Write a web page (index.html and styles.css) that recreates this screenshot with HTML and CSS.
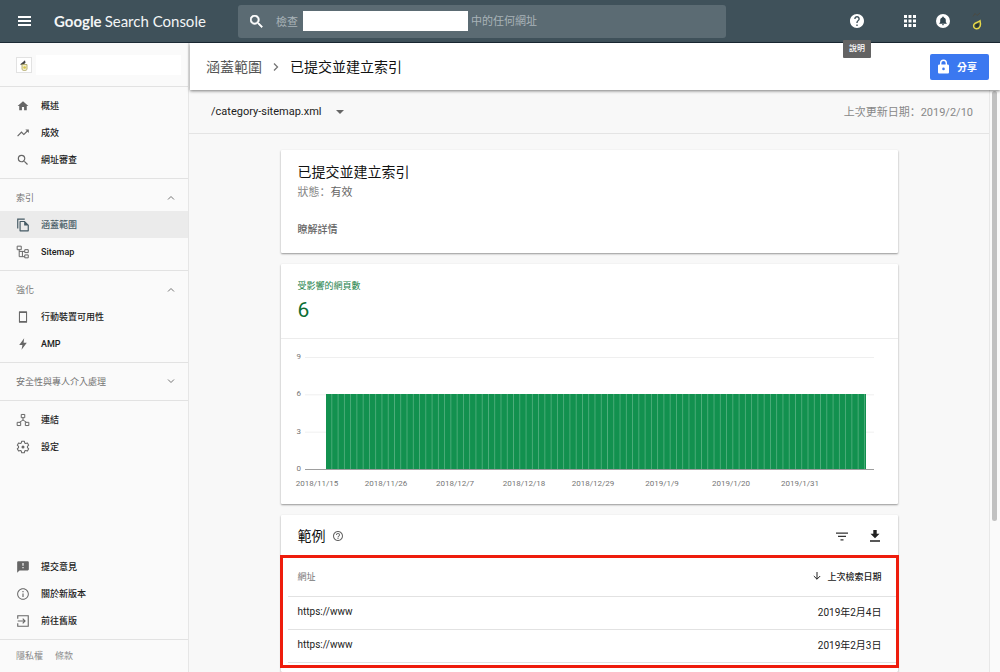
FILE: index.html
```html
<!DOCTYPE html>
<html lang="zh-Hant">
<head>
<meta charset="utf-8">
<meta name="viewport" content="width=device-width, initial-scale=1">
<title>Google Search Console</title>
<link rel="stylesheet" href="styles.css">
</head>
<body>
<header class="topbar">
  <button class="icon-button menu-button" aria-label="選單">
    <svg width="14" height="10" viewBox="0 0 14 10"><path fill="#fff" d="M0 0h13v2H0zM0 4h13v2H0zM0 8h13v2H0z"/></svg>
  </button>
  <a class="logo" href="#"><span class="logo-brand">Google</span><span class="logo-product">Search Console</span></a>
  <form class="search" role="search">
    <svg width="13" height="13" viewBox="3 3 18 18"><path fill="#fff" stroke="#fff" stroke-width=".8" d="M15.5 14h-.79l-.28-.27A6.47 6.47 0 0 0 16 9.500 6.500 6.500 0 1 0 9.500 16c1.610 0 3.090-.59 4.230-1.570l.27.28v.79l5 4.990L20.490 19l-4.990-5zm-6 0C7.010 14 5 11.990 5 9.500S7.010 5 9.500 5 14 7.010 14 9.500 11.990 14 9.500 14z"/></svg>
    <label class="search-label" for="inspect">檢查</label>
    <span class="search-property"></span>
    <input class="search-input" id="inspect" type="text" placeholder="中的任何網址">
  </form>
  <div class="actions">
    <div class="help">
      <button class="icon-button" aria-label="說明" aria-describedby="help-tip">
        <svg width="14" height="14" viewBox="2 2 20 20"><path fill="#fff" d="M12 2C6.480 2 2 6.480 2 12s4.480 10 10 10 10-4.480 10-10S17.520 2 12 2zm1 17h-2v-2h2v2zm2.070-7.750l-.9.92C13.450 12.900 13 13.500 13 15h-2v-.5c0-1.100.45-2.100 1.170-2.830l1.240-1.260c.37-.36.59-.86.59-1.410 0-1.100-.9-2-2-2s-2 .9-2 2H8c0-2.210 1.790-4 4-4s4 1.790 4 4c0 .88-.36 1.680-.93 2.250z"/></svg>
      </button>
      <span class="tooltip" id="help-tip" role="tooltip">說明</span>
    </div>
    <button class="icon-button" aria-label="應用程式">
      <svg width="12" height="12" viewBox="0 0 12 12"><path fill="#fff" d="M0 0h3v3H0zM4.500 0h3v3h-3zM9 0h3v3H9zM0 4.500h3v3H0zM4.500 4.500h3v3h-3zM9 4.500h3v3H9zM0 9h3v3H0zM4.500 9h3v3h-3zM9 9h3v3H9z"/></svg>
    </button>
    <button class="icon-button" aria-label="通知">
      <svg width="14" height="14" viewBox="0 0 14 14"><circle cx="7" cy="7" r="7" fill="#fff"/><path fill="#33464f" d="M7 2.600c.5 0 .8.3.8.8 1.300.4 2 1.400 2 2.800v2.100l.9.900v.6H3.300v-.6l.9-.9V6.200c0-1.400.7-2.400 2-2.800 0-.5.3-.8.8-.8zM6 10.200h2c0 .6-.4 1-1 1s-1-.4-1-1z"/></svg>
    </button>
    <button class="icon-button" aria-label="帳戶">
      <svg width="14" height="20" viewBox="0 0 14 20"><path d="M3 5.500l2-3 2 2 3-2.500" fill="none" stroke="#4a4a42" stroke-width="1"/><path d="M10 8.800c.5 1.900.7 4 .1 5.500-.8 1.900-2.600 2.800-4.400 2.300-1.900-.6-2.600-2.500-1.700-4.200C5 10.800 7.500 10.600 10 8.800z" transform="translate(0 1)" fill="#39443a" stroke="#e6d84a" stroke-width="1.500"/><circle cx="7.300" cy="14.300" r="1.200" fill="#22302e"/></svg>
    </button>
  </div>
</header>

<div class="layout">
  <nav class="sidebar">
    <button class="property" aria-label="資源">
      <span class="favicon"><svg width="10" height="12" viewBox="0 0 10 12"><path d="M1 5.500L6 1.200l.5 2.600L4 6z" fill="#444"/><path d="M3 5.500h5v4.500c0 1-1 1.500-2.500 1.500S3 11 3 10z" fill="#f1eecb" stroke="#a8a05a" stroke-width=".8"/><circle cx="5.600" cy="8.500" r="1.300" fill="#d9c64a"/></svg></span>
      <span class="property-name"></span>
    </button>
    <div class="group">
      <a class="item" href="#"><svg class="icon" viewBox="-1 -1 26 26"><path d="M10 20v-6h4v6h5v-8h3L12 3 2 12h3v8z"/></svg>概述</a>
      <a class="item" href="#"><svg class="icon" viewBox="0 0 24 24"><path d="M16 6l2.290 2.290-4.880 4.880-4-4L2 16.590 3.410 18l6-6 4 4 6.300-6.290L22 12V6z"/></svg>成效</a>
      <a class="item" href="#"><svg class="icon" viewBox="0 0 24 24"><path d="M15.500 14h-.79l-.28-.27A6.470 6.470 0 0 0 16 9.500 6.500 6.500 0 1 0 9.500 16c1.610 0 3.090-.59 4.230-1.570l.27.28v.79l5 4.990L20.490 19l-4.990-5zm-6 0C7.010 14 5 11.990 5 9.500S7.010 5 9.500 5 14 7.010 14 9.500 11.990 14 9.500 14z"/></svg>網址審查</a>
    </div>
    <div class="group">
      <button class="group-title">索引<svg width="8" height="5" viewBox="0 0 8 5"><path d="M1 4.500l3-3 3 3" fill="none" stroke="#757575"/></svg></button>
      <a class="item item-active" href="#" aria-current="page"><svg class="icon" viewBox="0 0 24 24"><path d="M2 1h13v2H4v15H2zM7 5h8l7 7v10a1 1 0 0 1-1 1H7a1 1 0 0 1-1-1V6a1 1 0 0 1 1-1zm1 2v14h12v-8h-6V7z" fill-rule="evenodd"/></svg>涵蓋範圍</a>
      <a class="item" href="#"><svg class="icon" viewBox="0 0 24 24"><path d="M2 2h7v6H2zM15 8h6v5h-6zM15 17h6v5h-6zM5.500 8v12H15M5.500 11H15M11 11v9" fill="none" stroke="currentColor" stroke-width="1.700"/></svg>Sitemap</a>
    </div>
    <div class="group">
      <button class="group-title">強化<svg width="8" height="5" viewBox="0 0 8 5"><path d="M1 4.500l3-3 3 3" fill="none" stroke="#757575"/></svg></button>
      <a class="item" href="#"><svg class="icon" viewBox="0 0 24 24"><path d="M6 2h12a1 1 0 0 1 1 1v18a1 1 0 0 1-1 1H6a1 1 0 0 1-1-1V3a1 1 0 0 1 1-1zm.8 3v14h10.400V5z" fill-rule="evenodd"/></svg>行動裝置可用性</a>
      <a class="item" href="#"><svg class="icon" viewBox="0 0 24 24"><path d="M14 2L5.500 13.500H11L9.500 22 18.500 10H13z"/></svg>AMP</a>
    </div>
    <div class="group">
      <button class="group-title">安全性與專人介入處理<svg width="8" height="5" viewBox="0 0 8 5"><path d="M1 .5l3 3 3-3" fill="none" stroke="#757575"/></svg></button>
    </div>
    <div class="group group-last">
      <a class="item" href="#"><svg class="icon" viewBox="0 0 24 24"><path d="M9 2.500h6V8H9zM2 16h6v5.500H2zM16 16h6v5.500h-6zM12 8v4l-6 4M12 12l6 4" fill="none" stroke="currentColor" stroke-width="1.700"/></svg>連結</a>
      <a class="item" href="#"><svg class="icon" viewBox="0 0 24 24"><path d="M9.800 2h4.400l.7 3 1.800 1 2.900-.9 2.200 3.800-2.200 2.100v2l2.200 2.100-2.200 3.800-2.900-.9-1.800 1-.7 3H9.800l-.7-3-1.800-1-2.900.9-2.200-3.800L4.400 13v-2L2.200 8.900l2.200-3.800 2.900.9 1.800-1z" fill="none" stroke="currentColor" stroke-width="1.800" stroke-linejoin="round"/><circle cx="12" cy="12" r="2.600"/></svg>設定</a>
    </div>
    <div class="group group-bottom">
      <a class="item" href="#"><svg class="icon" viewBox="0 0 24 24"><path d="M20 2H4c-1.100 0-2 .9-2 2v18l4-4h14c1.100 0 2-.9 2-2V4c0-1.100-.9-2-2-2zm-7 12h-2v-2h2v2zm0-4h-2V5h2v5z"/></svg>提交意見</a>
      <a class="item" href="#"><svg class="icon" viewBox="0 0 24 24"><path d="M11 17h2v-6h-2v6zm1-15C6.480 2 2 6.480 2 12s4.480 10 10 10 10-4.480 10-10S17.520 2 12 2zm0 18.300c-4.600 0-8.300-3.700-8.300-8.300S7.400 3.700 12 3.700s8.300 3.700 8.300 8.300-3.700 8.300-8.300 8.300zM11 9h2V7h-2v2z"/></svg>關於新版本</a>
      <a class="item" href="#"><svg class="icon" viewBox="0 0 24 24"><path d="M3 8V3h18v18H3v-5M3 12h12M11.500 8l4 4-4 4" fill="none" stroke="currentColor" stroke-width="1.900"/></svg>前往舊版</a>
    </div>
    <footer class="legal"><a href="#">隱私權</a><a href="#">條款</a></footer>
  </nav>

  <main class="main">
    <div class="titlebar">
      <a class="crumb" href="#">涵蓋範圍</a>
      <svg width="6" height="8" viewBox="0 0 6 8"><path d="M1 .5L4.500 4 1 7.500" fill="none" stroke="#757575" stroke-width="1.300"/></svg>
      <h1 class="crumb crumb-current">已提交並建立索引</h1>
      <button class="share">
        <svg width="11" height="15" viewBox="0 0 11 15"><path fill="#fff" fill-rule="evenodd" d="M2 5.500V4a3.500 3.500 0 0 1 7 0v1.500h.7c.7 0 1.300.6 1.300 1.300v6.400c0 .7-.6 1.300-1.300 1.300H1.300c-.7 0-1.300-.6-1.300-1.300V6.800c0-.7.6-1.300 1.300-1.300zm1.400 0h4.200V4a2.100 2.100 0 0 0-4.200 0zM5.500 8.600a1.300 1.300 0 1 0 0 2.600 1.300 1.300 0 0 0 0-2.600z"/></svg>
        分享
      </button>
    </div>
    <div class="viewport">
      <div class="content">
        <div class="filterbar">
          <label class="sitemap-picker" aria-label="Sitemap">
            <select class="sitemap-select"><option>/category-sitemap.xml</option></select>
            <svg width="8" height="4" viewBox="0 0 8 4"><path fill="#666" d="M0 0h8L4 4z"/></svg>
          </label>
          <span class="updated">上次更新日期<span class="colon" lang="zh-Hans">：</span>2019/2/10</span>
        </div>
        <div class="cards">
          <section class="card status">
            <h2 class="card-title">已提交並建立索引</h2>
            <p class="state">狀態<span class="colon" lang="zh-Hans">：</span><span class="state-value">有效</span></p>
            <a class="learn" href="#">瞭解詳情</a>
          </section>

          <section class="card">
            <div class="metric">
              <span class="metric-label">受影響的網頁數</span>
              <span class="metric-value">6</span>
            </div>
            <div class="chart">
              <div class="plot">
                <div class="axis"><span>9</span><span>6</span><span>3</span><span>0</span></div>
                <div class="grid"><div class="bars"></div></div>
              </div>
              <div class="dates"><span>2018/11/15</span><span>2018/11/26</span><span>2018/12/7</span><span>2018/12/18</span><span>2018/12/29</span><span>2019/1/9</span><span>2019/1/20</span><span>2019/1/31</span></div>
            </div>
          </section>

          <section class="card">
            <div class="examples-head">
              <h2 class="card-title examples-title">範例</h2>
              <svg width="10" height="10" viewBox="2 2 20 20"><path fill="#666" d="M11 18h2v-2h-2v2zm1-16C6.480 2 2 6.480 2 12s4.480 10 10 10 10-4.480 10-10S17.520 2 12 2zm0 18c-4.410 0-8-3.590-8-8s3.590-8 8-8 8 3.590 8 8-3.590 8-8 8zm0-14c-2.210 0-4 1.790-4 4h2c0-1.100.9-2 2-2s2 .9 2 2c0 2-3 1.750-3 5h2c0-2.250 3-2.500 3-5 0-2.210-1.790-4-4-4z"/></svg>
              <div class="tools">
                <button class="icon-button" aria-label="篩選"><svg width="12" height="9" viewBox="0 0 12 9"><path fill="#333" d="M0 .5h12v1.300H0zM2 3.800h8v1.300H2zM4.500 7.200h3v1.300h-3z"/></svg></button>
                <button class="icon-button" aria-label="下載"><svg width="10" height="12" viewBox="0 0 10 12"><path fill="#222" d="M3.300 0h3.400v3.800h2.800L5 8.300.500 3.800h2.800zM0 10.300h10v1.400H0z"/></svg></button>
              </div>
            </div>
            <div class="highlight">
              <table class="table">
                <thead><tr><th>網址</th><th class="date sorted"><svg width="8" height="8" viewBox="0 0 8 8"><path d="M4 0v7.200M.8 4L4 7.200 7.200 4" fill="none" stroke="#222"/></svg>上次檢索日期</th></tr></thead>
                <tbody>
                  <tr><td>https://www</td><td class="date">2019年2月4日</td></tr>
                  <tr><td>https://www</td><td class="date">2019年2月3日</td></tr>
                </tbody>
              </table>
            </div>
          </section>
        </div>
      </div>
      <div class="scroll-track"><div class="scroll-thumb"></div></div>
    </div>
  </main>
</div>
</body>
</html>
```
FILE: styles.css
```css
* {
  box-sizing: border-box;
}

body {
  margin: 0;
  height: 100vh;
  display: flex;
  flex-direction: column;
  overflow: hidden;
  background: #f8f8f8;
  color: #212121;
  font-family: Roboto, "Noto Sans CJK TC", sans-serif;
  font-size: 9px;
}

a {
  color: inherit;
  text-decoration: none;
}

button,
input,
select {
  font: inherit;
  color: inherit;
  border: 0;
  padding: 0;
  background: none;
}

svg {
  display: block;
  flex: none;
}

/* The simplified-Chinese face sets this mark at the left of its cell. */
.colon {
  font-family: "Noto Sans CJK SC", sans-serif;
  line-height: 1;
}

/* Top bar */

.topbar {
  flex: none;
  display: flex;
  align-items: center;
  height: 43px;
  padding: 0 16px 0 18px;
  background: #3f515a;
  border-bottom: 1px solid #1b2a35;
}

.icon-button {
  display: flex;
  align-items: center;
}

.logo {
  display: flex;
  align-items: baseline;
  gap: 3px;
  width: 184px;
  margin-left: 22px;
  color: #f3f5f6;
  font-family: Lato, sans-serif;
  font-size: 15px;
  white-space: nowrap;
}

.logo-brand {
  font-weight: 700;
}

.search {
  flex: 0 1 488px;
  display: flex;
  align-items: center;
  height: 33px;
  padding: 0 12px;
  background: #5b6b73;
  border-radius: 3px;
  color: #a9b3b8;
  font-size: 11px;
}

.search-label {
  margin-left: 13px;
}

.search-property {
  width: 165px;
  height: 20px;
  margin: 0 3px 0 5px;
  background: #fff;
}

.search-input {
  flex: 1;
  min-width: 0;
  outline: 0;
}

.search-input::placeholder {
  color: #a9b3b8;
  opacity: 1;
}

.actions {
  display: flex;
  align-items: center;
  gap: 20px;
  margin-left: auto;
}

.help {
  position: relative;
  margin-right: 20px;
}

.tooltip {
  position: absolute;
  top: 26px;
  left: -7px;
  z-index: 3;
  padding: 0 6px;
  background: #636363;
  border-radius: 1px;
  color: #fff;
  font-size: 8px;
  font-weight: 500;
  line-height: 18px;
  white-space: nowrap;
}

.layout {
  flex: 1;
  display: flex;
  min-height: 0;
}

/* Sidebar */

.sidebar {
  flex: none;
  display: flex;
  flex-direction: column;
  width: 189px;
  border-right: 1px solid #e6e6e6;
  background: #fafafa;
}

.property {
  display: flex;
  align-items: center;
  gap: 4px;
  height: 44px;
  padding: 0 7px 0 16px;
  border-bottom: 1px solid #e2e2e2;
}

.favicon {
  display: grid;
  place-items: center;
  width: 16px;
  height: 16px;
  background: #fff;
  border: 1px solid #e2e2e2;
}

.property-name {
  flex: 1;
  height: 20px;
  background: #fff;
}

.group {
  padding: 5px 0;
  border-bottom: 1px solid #e2e2e2;
}

.group-last {
  border-bottom: 0;
}

.group-bottom {
  margin-top: auto;
}

.group-title {
  display: flex;
  align-items: center;
  justify-content: space-between;
  width: 100%;
  height: 27px;
  padding: 0 13px 0 16px;
  color: #757575;
}

.item {
  display: flex;
  align-items: center;
  gap: 11px;
  height: 27px;
  padding-left: 16px;
  font-weight: 500;
}

.item-active {
  background: #ebebeb;
  color: #455a64;
}

.icon {
  width: 14px;
  height: 14px;
  color: #666;
  fill: #666;
}

.item-active .icon {
  fill: #455a64;
}

.legal {
  display: flex;
  align-items: center;
  gap: 12px;
  height: 32px;
  padding: 0 0 2px 16px;
  color: #8a8a8a;
}

/* Main column */

.main {
  flex: 1;
  display: flex;
  flex-direction: column;
  min-width: 0;
}

.titlebar {
  position: relative;
  z-index: 2;
  flex: none;
  display: flex;
  align-items: center;
  gap: 11px;
  height: 47px;
  margin-left: 1px;
  padding: 0 11px 0 16px;
  background: #fff;
  box-shadow: 0 1px 3px rgba(0, 0, 0, 0.5);
}

.crumb {
  margin: 0;
  padding-bottom: 2px;
  color: #555;
  font-size: 14px;
  font-weight: 400;
}

.crumb-current {
  color: #111;
}

.share {
  display: flex;
  align-items: center;
  gap: 8px;
  height: 26px;
  margin-left: auto;
  padding: 0 12px 0 8px;
  background: #3b78f0;
  border-radius: 2px;
  color: #fff;
  font-size: 10px;
  font-weight: 700;
}

.viewport {
  flex: 1;
  display: flex;
  min-height: 0;
}

.content {
  flex: 1;
  min-width: 0;
  overflow: hidden;
}

.filterbar {
  display: flex;
  align-items: center;
  justify-content: space-between;
  height: 44px;
  padding: 0 16px 0 22px;
  border-bottom: 1px solid #e4e4e4;
  font-size: 11px;
}

.sitemap-picker {
  display: flex;
  align-items: center;
  gap: 14px;
}

.sitemap-select {
  appearance: none;
  outline: 0;
}

.updated {
  padding-bottom: 2px;
  color: #888;
}

.cards {
  display: flex;
  flex-direction: column;
  gap: 11px;
  max-width: 617px;
  margin: 16px auto;
}

.card {
  background: #fff;
  border-radius: 1px;
  box-shadow: 0 1px 2px rgba(0, 0, 0, 0.4);
}

.card-title {
  margin: 0;
  color: #111;
  font-size: 14px;
  font-weight: 400;
  line-height: 20px;
}

.status {
  padding: 12px 17px 14px;
  font-size: 10px;
}

.state {
  margin: 1px 0 0;
  color: #888;
  font-size: 11px;
  line-height: 20px;
}

.state-value {
  color: #666;
}

.learn {
  display: block;
  margin-top: 18px;
  color: #666;
  font-weight: 500;
  line-height: 18px;
}

.metric {
  display: flex;
  flex-direction: column;
  height: 75px;
  padding: 14px 17px 0;
  border-bottom: 1px solid #ececec;
  color: #23824a;
}

.metric-label {
  line-height: 16px;
}

.metric-value {
  color: #0d6e33;
  font-size: 21px;
  line-height: 32px;
}

.chart {
  padding: 12px 0 13px;
  color: #757575;
  font-size: 8px;
}

.plot {
  display: flex;
  gap: 3px;
  padding: 0 24px 0 16px;
}

.axis {
  display: flex;
  flex-direction: column;
  justify-content: space-between;
  width: 5px;
  height: 124px;
  line-height: 12px;
}

.grid {
  flex: 1;
  display: flex;
  align-items: flex-end;
  height: 113px;
  margin-top: 6px;
  padding: 0 8px 0 21px;
  border-bottom: 1px solid #9e9e9e;
  background: linear-gradient(to bottom, #efefef 1px, #fff 1px) 0 0 / 100% calc(100% / 3);
}

/* One tile of the background is one day; the plot spans 86 days. */
.bars {
  flex: 1;
  height: 75px;
  background: linear-gradient(to right, #12914f 0 84%, #4fae7c 84%) 0 0 / calc(100% / 86) 100%;
}

.dates {
  display: grid;
  grid-template-columns: repeat(8, 1fr);
  margin: 2px 63px 0 2px;
  line-height: 14px;
  text-align: center;
}

/* Examples table */

.examples-head {
  display: flex;
  align-items: center;
  gap: 7px;
  height: 40px;
  padding: 2px 18px 0 17px;
}

.tools {
  display: flex;
  align-items: center;
  gap: 22px;
  margin-left: auto;
}

.highlight {
  margin: 0 -1px 4px;
  padding: 0 0 2px 5px;
  border: 3px solid #ee1c0c;
}

.table {
  width: 100%;
  border-collapse: collapse;
}

.table th,
.table td {
  height: 33px;
  padding: 0 14px 2px 10px;
  border-bottom: 1px solid #e2e2e2;
  font-size: 10px;
  font-weight: 400;
  text-align: left;
}

.table th {
  height: 38px;
  padding-bottom: 0;
  color: #757575;
  font-size: 9px;
}

.table .date {
  text-align: right;
}

.table .sorted {
  color: #212121;
  font-weight: 500;
}

.sorted svg {
  display: inline-block;
  margin-right: 6px;
}

.scroll-track {
  flex: none;
  width: 11px;
  padding: 1px 3px 0 2px;
  border-left: 1px solid #e8e8e8;
  background: #fafafa;
}

.scroll-thumb {
  width: 5px;
  height: 74%;
  background: #c1c1c1;
  border-radius: 3px;
}
```
